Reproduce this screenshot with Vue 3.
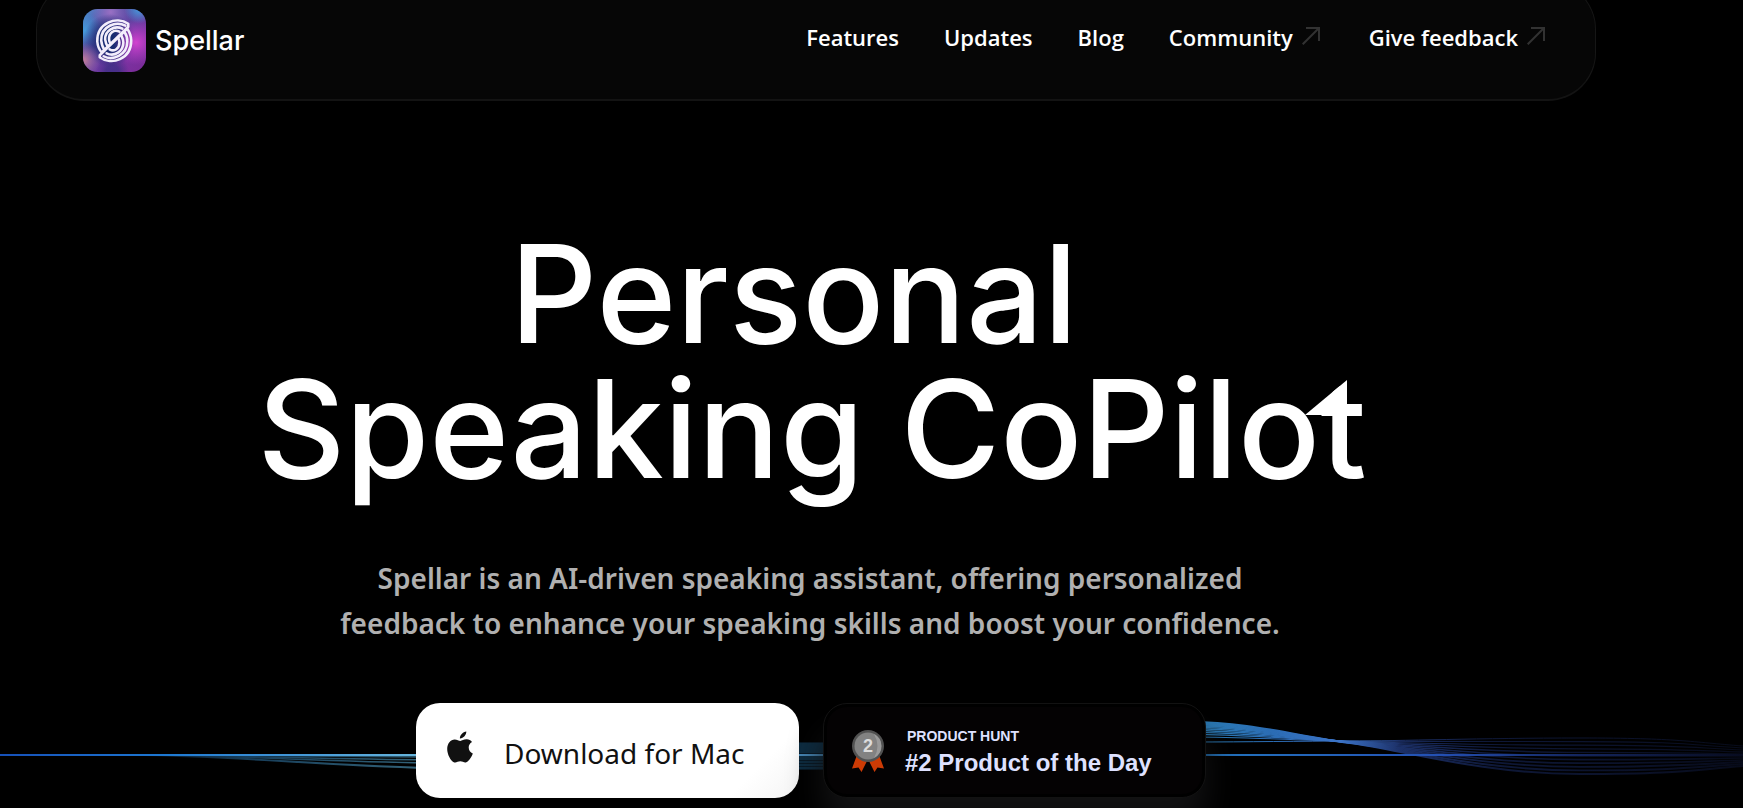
<script setup>
const links = [
  { label: 'Features' },
  { label: 'Updates' },
  { label: 'Blog' },
  { label: 'Community', external: true },
  { label: 'Give feedback', external: true },
]

// Strands left of the buttons fan out downward from the main line.
const leftWaves = [2, 5, 8, 13].map((drop, i) => ({
  d: `M${120 + i * 8} 55 C240 ${55 + drop * 0.1} 320 ${55 + drop * 0.8} 430 ${55 + drop}`,
  width: i === 3 ? 2 : 1.5,
}))

// Strands between the two buttons.
const midWaves = [44, 46, 48, 50, 52, 57, 59, 62, 65, 68]

// Strands on the right cross each other, spread out again, then converge.
const count = 11
const rightWaves = Array.from({ length: count }, (_, i) => {
  const t = i / (count - 1)
  const start = 42 - 20 * Math.pow(t, 0.6)
  const cross = 41 + 2 * t
  const belly = 38 + 36 * t
  const end = 46 + 20 * t
  const slope = t * 9
  return {
    d: `M1190 ${start} C1250 ${start} 1300 ${cross - slope * 0.7} 1350 ${cross}
        S1480 ${belly} 1580 ${belly} S1690 ${(belly + end) / 2} 1743 ${end}`,
    width: 1 + t,
  }
})
</script>

<template>
  <div class="page">
    <header class="header">
      <a href="#" class="brand">
        <svg class="logo" viewBox="0 0 64 64" aria-hidden="true">
          <defs>
            <clipPath id="tile"><rect width="64" height="64" rx="15" /></clipPath>
            <linearGradient id="base" x1="0" y1="0" x2="1" y2="1">
              <stop offset="0" stop-color="#4b8fd0" />
              <stop offset="0.3" stop-color="#4e4c9f" />
              <stop offset="0.7" stop-color="#7b34a4" />
              <stop offset="1" stop-color="#7a2a96" />
            </linearGradient>
            <radialGradient id="pink"><stop offset="0" stop-color="#d242cf" /><stop offset="1" stop-color="#b53cc4" stop-opacity="0" /></radialGradient>
            <radialGradient id="navy"><stop offset="0" stop-color="#132a70" /><stop offset="0.4" stop-color="#1b2c72" /><stop offset="1" stop-color="#2b2c78" stop-opacity="0" /></radialGradient>
            <radialGradient id="rose"><stop offset="0" stop-color="#c97f9b" /><stop offset="1" stop-color="#a070a8" stop-opacity="0" /></radialGradient>
            <radialGradient id="sky"><stop offset="0" stop-color="#459bdc" /><stop offset="1" stop-color="#459bdc" stop-opacity="0" /></radialGradient>
            <radialGradient id="lilac"><stop offset="0" stop-color="#9a70c4" /><stop offset="1" stop-color="#8a63bd" stop-opacity="0" /></radialGradient>
          </defs>
          <g clip-path="url(#tile)">
            <rect width="64" height="64" fill="url(#base)" />
            <circle cx="28" cy="3" r="22" fill="url(#lilac)" />
            <circle cx="57" cy="0" r="15" fill="url(#sky)" />
            <circle cx="2" cy="22" r="18" fill="url(#sky)" />
            <circle cx="27" cy="32" r="27" fill="url(#navy)" />
            <circle cx="54" cy="34" r="23" fill="url(#pink)" />
            <circle cx="0" cy="52" r="18" fill="url(#rose)" />
            <circle cx="30" cy="64" r="17" fill="url(#navy)" opacity="0.5" />
          </g>
          <g fill="none" stroke="#f2edfb" stroke-width="2.600" stroke-linecap="round" stroke-linejoin="round">
            <path d="M46 15 C34 7 14 14 14.500 33 C15 39 17 42 19 44 L46 18 Z" />
            <path d="M43 17 C34 12 18 17 18.500 32 C19 36 20 39 21.500 41" />
            <path d="M40 20 C32 16 22 22 22.500 31 C23 34 23.500 36 25 38" />
            <path d="M37 23 C31 20 26 25 26.500 31 C26.500 32 27 34 28 35" />
            <path d="M17 49 C29 58 49 51 49 32 C49 26 47 23 45 20 L17 47 Z" />
            <path d="M21 48 C30 53 45 47 45 33 C45 29 44 26 42.500 24" />
            <path d="M24 45 C32 49 41 43 41 34 C41 31 40 29 39 27" />
            <path d="M27 41 C32 44 37 40 37 34 C37 32 36.500 31 36 30" />
          </g>
        </svg>
        <span class="brand-name">Spellar</span>
      </a>
      <nav class="nav" aria-label="Main">
        <a v-for="link in links" :key="link.label" href="#" class="nav-link">
          {{ link.label }}
          <svg v-if="link.external" class="arrow" viewBox="0 0 18 18" aria-hidden="true">
            <path d="M0.700 17.300 L17 1 M4 1 H17 V14" fill="none" stroke="currentColor" stroke-width="2" />
          </svg>
        </a>
      </nav>
    </header>

    <main class="hero">
      <h1 class="title">
        <span class="line">Personal&nbsp;</span>
        <span class="line">Speaking CoPilo<span class="tee">t<svg class="sail" viewBox="0 0 42 35" aria-hidden="true"><path d="M20 0 H42 L20 18.300 Z" fill="#000" /><path d="M42 0 V35 H0 Z" fill="currentColor" /></svg></span></span>
      </h1>
      <p class="lead">
        Spellar is an AI-driven speaking assistant, offering personalized<br />
        feedback to enhance your speaking skills and boost your confidence.
      </p>
    </main>

    <section class="actions">
      <svg class="waves" viewBox="0 0 1743 108" preserveAspectRatio="none" aria-hidden="true">
        <defs>
          <linearGradient id="mainLeft" gradientUnits="userSpaceOnUse" x1="0" y1="0" x2="830" y2="0">
            <stop offset="0" stop-color="#1650b8" />
            <stop offset="0.2" stop-color="#1d78d2" />
            <stop offset="0.5" stop-color="#66b4dc" />
            <stop offset="1" stop-color="#4484b4" />
          </linearGradient>
          <linearGradient id="mainRight" gradientUnits="userSpaceOnUse" x1="1190" y1="0" x2="1743" y2="0">
            <stop offset="0" stop-color="#2276bc" />
            <stop offset="0.45" stop-color="#2450b4" />
            <stop offset="0.7" stop-color="#14265e" />
            <stop offset="1" stop-color="#080c20" />
          </linearGradient>
          <linearGradient id="fanLeft" gradientUnits="userSpaceOnUse" x1="120" y1="0" x2="430" y2="0">
            <stop offset="0" stop-color="#0c2238" stop-opacity="0.3" />
            <stop offset="0.4" stop-color="#163c58" />
            <stop offset="1" stop-color="#34647a" />
          </linearGradient>
          <linearGradient id="fanRight" gradientUnits="userSpaceOnUse" x1="1190" y1="0" x2="1743" y2="0">
            <stop offset="0" stop-color="#2c80b8" />
            <stop offset="0.15" stop-color="#2b6cb4" />
            <stop offset="0.27" stop-color="#3c74c8" />
            <stop offset="0.38" stop-color="#1c3068" />
            <stop offset="0.55" stop-color="#0e1838" />
            <stop offset="0.85" stop-color="#0a1026" />
            <stop offset="1" stop-color="#070b1a" />
          </linearGradient>
        </defs>
        <path v-for="(w, i) in leftWaves" :key="'l' + i" :d="w.d" :stroke-width="w.width" stroke="url(#fanLeft)" fill="none" />
        <rect x="790" y="42" width="45" height="28" fill="#071825" />
        <path v-for="y in midWaves" :key="'m' + y" :d="`M790 ${y} H835`" stroke="#14405f" fill="none" />
        <path v-for="(w, i) in rightWaves" :key="'r' + i" :d="w.d" :stroke-width="w.width" stroke="url(#fanRight)" fill="none" />
        <rect x="0" y="54" width="830" height="2" fill="url(#mainLeft)" />
        <rect x="1190" y="54" width="553" height="2" fill="url(#mainRight)" />
      </svg>

      <div class="buttons">
        <button type="button" class="download">
          <svg class="apple" viewBox="0 0 26 32" aria-hidden="true">
            <path fill="currentColor" d="M19.300 0.500 C19.500 3.800 16.200 7.600 12.900 7.400 C12.700 4.200 15.900 0.900 19.300 0.500 Z M25 11 C22.800 12.400 21.700 14.100 21.700 16.600 C21.700 19.500 23.400 21.700 25.800 22.600 C24.800 25.600 22.100 30.300 19.300 31.300 C17.200 32 15.700 30.300 13.300 30.300 C10.900 30.300 9.300 32 7.300 31.400 C3.500 30.100 0.200 23.100 0.200 18 C0.200 12.300 3.600 8.400 7.700 8.400 C10 8.400 11.900 9.900 13.400 9.900 C14.900 9.900 16.900 8.200 19.800 8.300 C21.900 8.400 23.800 9.300 25 11 Z" />
          </svg>
          <span class="download-label">Download for Mac</span>
        </button>
        <a href="#" class="badge">
          <svg class="medal" viewBox="0 0 32 42" aria-hidden="true">
            <path d="M5 25 L0 38.500 L6.500 37.500 L9.500 42 L16 29 L22.500 42 L25.500 37.500 L32 38.500 L27 25 Z" fill="#cc3b05" />
            <circle cx="16" cy="16" r="16" fill="#515151" />
            <circle cx="16" cy="16" r="13.500" fill="#828282" />
            <path d="M22 4 A13.500 13.500 0 0 1 22 28 Q29 16 22 4 Z" fill="#9b9b9b" />
            <text x="16" y="22" text-anchor="middle" class="medal-rank">2</text>
          </svg>
          <span class="badge-text">
            <span class="badge-kicker">PRODUCT HUNT</span>
            <span class="badge-title">#2 Product of the Day</span>
          </span>
        </a>
      </div>
    </section>
  </div>
</template>

<style>
html,
body {
  background: #000;
}
</style>

<style scoped>
.page {
  height: 100vh;
  overflow: hidden;
  background: #000;
  color: #fff;
  font-family: "Noto Sans", "Open Sans", sans-serif;
  display: flex;
  flex-direction: column;
}

.header {
  box-sizing: border-box;
  flex: none;
  height: 120px;
  margin: -19px 147px 0 36px;
  padding: 0 46px;
  display: flex;
  align-items: center;
  justify-content: space-between;
  background: #060606;
  border: 1px solid #161616;
  border-bottom: 2px solid #131313;
  border-radius: 48px;
}

.brand {
  display: flex;
  align-items: center;
  gap: 9px;
  color: #fff;
  text-decoration: none;
}

.logo {
  width: 63px;
  height: 63px;
}

.brand-name {
  font: 500 27px/32px Inter, sans-serif;
}

.nav {
  display: flex;
  align-items: center;
  gap: 45px;
}

.nav-link {
  display: flex;
  align-items: center;
  gap: 9px;
  margin-bottom: 8px;
  color: #fff;
  font: 600 22px/32px "Open Sans", sans-serif;
  text-decoration: none;
  white-space: nowrap;
}

.arrow {
  width: 18px;
  height: 18px;
  margin: 0 4px 2px 0;
  color: #323232;
}

.hero {
  flex: none;
  margin-right: 119px;
  padding-top: 125px;
  text-align: center;
}

.title {
  margin: 0;
  font: 500 136px/135px Inter, sans-serif;
  white-space: nowrap;
}

.line {
  display: block;
}

.tee {
  position: relative;
}

.sail {
  position: absolute;
  right: 20px;
  top: 34px;
  width: 42px;
  height: 35px;
}

.lead {
  margin: 60px 4px 0 0;
  color: #b0b0b0;
  font-weight: 600;
  font-size: 28px;
  line-height: 45px;
}

.actions {
  position: relative;
  flex: none;
  margin-top: 54px;
  padding-right: 121px;
}

.waves {
  position: absolute;
  left: 0;
  top: 0;
  width: 100%;
  height: 108px;
}

.buttons {
  position: relative;
  display: flex;
  justify-content: center;
  gap: 24px;
  padding: 3px 0 60px;
}

.download,
.badge {
  box-sizing: border-box;
  width: 383px;
  height: 95px;
  display: flex;
  align-items: center;
  border-radius: 24px;
}

.download {
  padding: 0 31px;
  gap: 31px;
  border: 0;
  background: linear-gradient(135deg, #fff 85%, #f4f4f4);
  color: #111;
  font: 400 28px/40px "Noto Sans", sans-serif;
}

.apple {
  width: 26px;
  height: 32px;
  margin-bottom: 8px;
}

.download-label {
  margin-top: 4px;
}

.badge {
  padding: 0 28px;
  gap: 21px;
  background: #040203;
  border: 1px solid #121212;
  box-shadow: inset 0 0 0 3px #000, 0 28px 32px 0 #121213;
  color: #dee1ff;
  font-family: "Liberation Sans", Arial, sans-serif;
  font-weight: 700;
  text-decoration: none;
}

.medal {
  width: 32px;
  height: 42px;
}

.medal-rank {
  font: 700 18px "Liberation Sans", Arial, sans-serif;
  fill: #dcdcdc;
}

.badge-text {
  display: flex;
  flex-direction: column;
}

.badge-kicker {
  padding-left: 2px;
  font-size: 14px;
  line-height: 24px;
}

.badge-title {
  font-size: 24px;
  line-height: 30px;
}
</style>
